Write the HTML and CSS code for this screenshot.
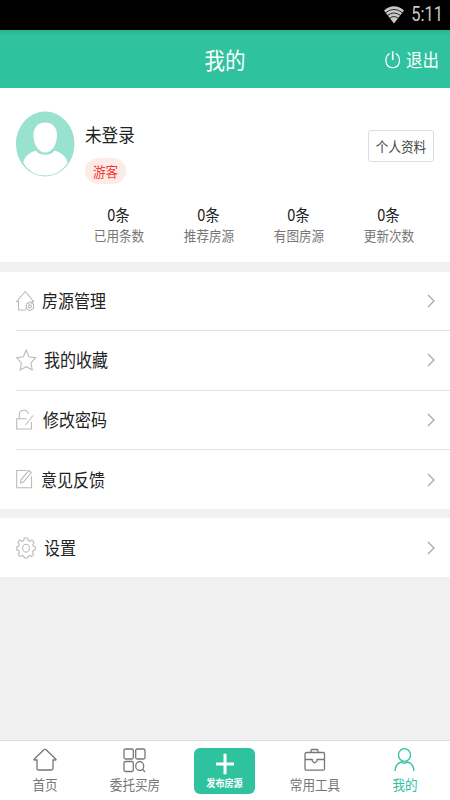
FILE: index.html
```
<!DOCTYPE html>
<html lang="zh-CN">
<head>
<meta charset="utf-8">
<title>我的</title>
<link rel="stylesheet" href="styles.css">
</head>
<body>
<div class="app">
  <div class="status">
    <svg class="wifi" width="20" height="18" viewBox="0 0 20 18"><path d="M0 4.500Q10-3.800 20 4.500L10 17.500Z" fill="#c8c8c8"/><path d="M1.500 6.700Q10 .2 18.500 6.700M3.500 9.500Q10 4.500 16.500 9.500M5.600 12.300Q10 8.800 14.400 12.300" fill="none" stroke="#000" stroke-width=".8"/></svg>
    <span class="t clock">5:11</span>
  </div>
  <header class="header">
    <h1 class="t title">我的</h1>
    <div class="logout">
      <svg width="16" height="18" viewBox="0 0 16 18" fill="none" stroke="#fff"><path d="M4.700 2.600C-1 6-.3 16.500 7.700 16.700C15.700 16.500 16.400 6 10.700 2.600" stroke-width="1.200"/><path d="M7.700 .3V9" stroke-width="1.600"/></svg>
      <span class="t">退出</span>
    </div>
  </header>
  <section class="profile">
    <div class="user">
      <svg class="avatar" width="60" height="66" viewBox="0 0 60 66"><ellipse cx="30.200" cy="33" rx="29.300" ry="32.600" fill="#99e2d0"/><path d="M30.200 11.500C37.700 11.500 42 17 42 24C42 34 36.700 41.500 30.200 41.500C23.700 41.500 18.400 34 18.400 24C18.400 17 22.700 11.500 30.200 11.500Z" fill="#fff"/><path d="M21 39.500C24.200 45.300 36.200 45.300 39.400 39.500C45.700 41.500 50.700 44.500 52.700 51.500C47.700 60 39.200 64.500 30.200 64.500S12.700 60 8.200 51.500C10.200 44.500 14.700 41.500 21 39.500Z" fill="#fff"/></svg>
      <div class="ident">
        <div class="t name">未登录</div>
        <div class="tag"><span class="t">游客</span></div>
      </div>
      <div class="edit"><span class="t">个人资料</span></div>
    </div>
    <div class="stats">
      <div class="stat"><b class="t">0条</b><span class="t">已用条数</span></div>
      <div class="stat"><b class="t">0条</b><span class="t">推荐房源</span></div>
      <div class="stat"><b class="t">0条</b><span class="t">有图房源</span></div>
      <div class="stat"><b class="t">0条</b><span class="t">更新次数</span></div>
    </div>
  </section>
  <section class="menu">
    <div class="row">
      <svg class="ico" width="20" height="22" viewBox="0 0 20 22"><path d="M10 20H2.500V11.500H.8L9.300 1.500L17.500 11.500H16V13.500"/><path d="M13.800 12.200L17.500 14V18.500L13.800 20.700L10.300 18.500V14Z"/><circle cx="13.900" cy="16.400" r="1.500"/></svg>
      <span class="t label">房源管理</span><svg class="arrow" width="8" height="14" viewBox="0 0 8 14"><path d="M1 1L7 7L1 13"/></svg>
    </div>
    <div class="row">
      <svg class="ico" width="21" height="22" viewBox="0 0 21 22"><path d="M10.200 1L13 7.700L19.700 8.700L15 13.800L16.200 21L10.200 17.700L4.200 21L5.400 13.800L.7 8.700L7.400 7.700Z"/></svg>
      <span class="t label w2">我的收藏</span><svg class="arrow" width="8" height="14" viewBox="0 0 8 14"><path d="M1 1L7 7L1 13"/></svg>
    </div>
    <div class="row">
      <svg class="ico" width="20" height="22" viewBox="0 0 20 22"><path d="M11 9.700H.7V20H15.500V13M3.200 9.700V6Q3.500 1.300 7.700 1.300Q11.500 1.300 12.500 4.700M17 6.500L9.500 16"/></svg>
      <span class="t label w3">修改密码</span><svg class="arrow" width="8" height="14" viewBox="0 0 8 14"><path d="M1 1L7 7L1 13"/></svg>
    </div>
    <div class="row">
      <svg class="ico" width="20" height="22" viewBox="0 0 20 22"><path d="M11 1.500H.7V18.700H15.500V7M13 1.300L15.300 3.600L7.500 13L4.500 14L5 10.600Z"/></svg>
      <span class="t label w4">意见反馈</span><svg class="arrow" width="8" height="14" viewBox="0 0 8 14"><path d="M1 1L7 7L1 13"/></svg>
    </div>
  </section>
  <section class="menu second">
    <div class="row">
      <svg class="ico" width="20" height="22" viewBox="0 0 20 22"><path d="M8.300 1H11.700L12.300 3.500L14 4.300L16 2.900L18 5.300L16.800 7.500L17.300 9.300L19.300 10V12.800L17.300 13.500L16.600 15.300L17.700 17.500L15.600 19.600L13.700 18.400L12.200 19.100L11.700 21H8.300L7.700 19L6.200 18.400L4.300 19.600L2.200 17.500L3.300 15.300L2.700 13.500L.7 12.800V10L2.700 9.300L3.200 7.500L2 5.300L4 2.900L6 4.300L7.700 3.500Z"/><ellipse cx="10" cy="11.200" rx="3.400" ry="3.900"/></svg>
      <span class="t label w2">设置</span><svg class="arrow" width="8" height="14" viewBox="0 0 8 14"><path d="M1 1L7 7L1 13"/></svg>
    </div>
  </section>
  <nav class="tabs">
    <div class="tab"><svg width="26" height="26" viewBox="0 0 26 26"><path d="M5 12H2.700Q1.500 12 2.300 11L12.200 1.600Q13 1 13.800 1.600L23.700 11Q24.500 12 23.300 12H21V20.500Q21 22 19.500 22H6.500Q5 22 5 20.500Z"/></svg><span class="t">首页</span></div>
    <div class="tab"><svg width="26" height="26" viewBox="0 0 26 26"><rect x="2" y="1" width="9.300" height="10" rx="1.500"/><rect x="13.700" y="1" width="9.300" height="10" rx="1.500"/><rect x="2" y="13.500" width="9.300" height="10" rx="1.500"/><ellipse cx="17.700" cy="18" rx="4" ry="4.500"/><path d="M20.500 21.200L23 24"/></svg><span class="t">委托买房</span></div>
    <div class="tab"><div class="publish"><svg width="20" height="22" viewBox="0 0 20 22"><path d="M1 11H19M10 .7V21.300"/></svg><span class="t">发布房源</span></div></div>
    <div class="tab"><svg width="26" height="26" viewBox="0 0 26 26"><rect x="3" y="4.500" width="19.500" height="17.700" rx="1.500"/><path d="M9 4.500V2.500Q9 1.500 10 1.500H15Q16 1.500 16 2.500V4.500M3 11.500H10.300M15 11.500H22.500M10.300 11V13Q12.700 16.500 15 13V11"/></svg><span class="t">常用工具</span></div>
    <div class="tab active"><svg width="26" height="26" viewBox="0 0 26 26"><ellipse cx="12.500" cy="7" rx="6" ry="6.300"/><path d="M3 23Q3.500 15.500 9.500 14Q12.500 16.500 15.500 14Q21.500 15.500 22 23"/></svg><span class="t">我的</span></div>
  </nav>
</div>
</body>
</html>
```

FILE: styles.css
```
* { box-sizing: border-box; }
body {
  margin: 0;
  font-family: "Noto Sans CJK SC", sans-serif;
  color: #222;
}
svg { display: block; flex: none; }
.app {
  width: 450px;
  height: 800px;
  background: #f1f1f1;
  display: flex;
  flex-direction: column;
  overflow: hidden;
}
.t {
  display: block;
  transform: translateY(-1px) scaleY(1.11);
  white-space: nowrap;
  font-weight: 400;
}
.status {
  height: 30px;
  flex: none;
  background: #000;
  display: flex;
  justify-content: flex-end;
  align-items: center;
  padding-right: 7px;
}
.wifi { margin-right: 7px; margin-top: -1px; }
.clock {
  font: 16.500px/20px Roboto, sans-serif;
  color: #c8c8c8;
  transform: scaleY(1.18);
}
.header {
  height: 58px;
  flex: none;
  background: linear-gradient(#2ab28f, #2fc29f 5px);
  color: #fff;
  display: grid;
  grid-template-columns: 1fr auto 1fr;
  align-items: center;
  padding-right: 11px;
}
.title {
  grid-column: 2;
  margin: 2px 0 0 11px;
  font-size: 20.500px;
  line-height: 30px;
}
.logout {
  display: flex;
  justify-content: flex-end;
  align-items: center;
  gap: 5px;
  margin-top: 2px;
  font-size: 16.500px;
  line-height: 24px;
}
.profile {
  height: 175px;
  flex: none;
  background: #fff;
  border-bottom: 1px solid #eee;
}
.user {
  height: 116px;
  display: flex;
  padding: 23px 16px 0 15px;
}
.ident { margin-left: 10px; flex: 1; }
.name { font-size: 16.600px; line-height: 24px; margin-top: 12px; }
.tag {
  width: 41px;
  height: 26px;
  margin-top: 11px;
  border-radius: 13px;
  background: #fdece6;
  color: #fb3434;
  font-size: 12.600px;
  line-height: 27px;
  text-align: center;
}
.edit {
  width: 66px;
  height: 32px;
  margin-top: 19px;
  border: 1px solid #ddd;
  border-radius: 3px;
  font-size: 12.600px;
  line-height: 31px;
  color: #444;
  text-align: center;
}
.stats {
  display: grid;
  grid-template-columns: repeat(4, 90px);
  margin-left: 74px;
}
.stat { text-align: center; }
.stat b { font-size: 14.500px; line-height: 21px; margin-left: -1px; }
.stat span { font-size: 12.600px; line-height: 21px; color: #777; }
.menu {
  flex: none;
  margin-top: 9px;
  background: #fff;
  padding-left: 16px;
}
.row {
  height: 59.300px;
  display: flex;
  align-items: center;
  padding-right: 15px;
  border-bottom: 1px solid #e2e2e2;
}
.row:last-child { border-bottom: 0; }
.ico { fill: none; stroke: #bbb; stroke-width: 1.100; margin-right: -20px; }
.label { font-size: 16px; line-height: 24px; margin-left: 26px; }
.label.w2 { margin-left: 28px; }
.row:nth-child(2) .label { margin-left: 27px; }
.label.w3 { margin-left: 27px; }
.label.w4 { margin-left: 25px; }
.arrow { margin-left: auto; fill: none; stroke: #a5a5a5; stroke-width: 1.200; }
.tabs {
  height: 60px;
  flex: none;
  margin-top: auto;
  background: #fff;
  border-top: 1px solid #ddd;
  display: grid;
  grid-template-columns: repeat(5, 1fr);
}
.tab {
  display: flex;
  flex-direction: column;
  align-items: center;
  padding-top: 7px;
  font-size: 12.600px;
  line-height: 20px;
  color: #777;
}
.tab > svg { fill: none; stroke: #777; stroke-width: 1.300; margin-bottom: 1px; }
.tab.active { color: #2fc29f; }
.tab.active > svg { stroke: #2fc29f; }
.publish {
  width: 61px;
  height: 46px;
  margin-right: 1px;
  padding-top: 5px;
  border-radius: 6px;
  background: #2fc29f;
  color: #fff;
  display: flex;
  flex-direction: column;
  align-items: center;
  font-size: 9.100px;
  line-height: 18px;
}
.publish svg { fill: none; stroke: #fff; stroke-width: 3; }
.publish .t { font-weight: 700; }
```
